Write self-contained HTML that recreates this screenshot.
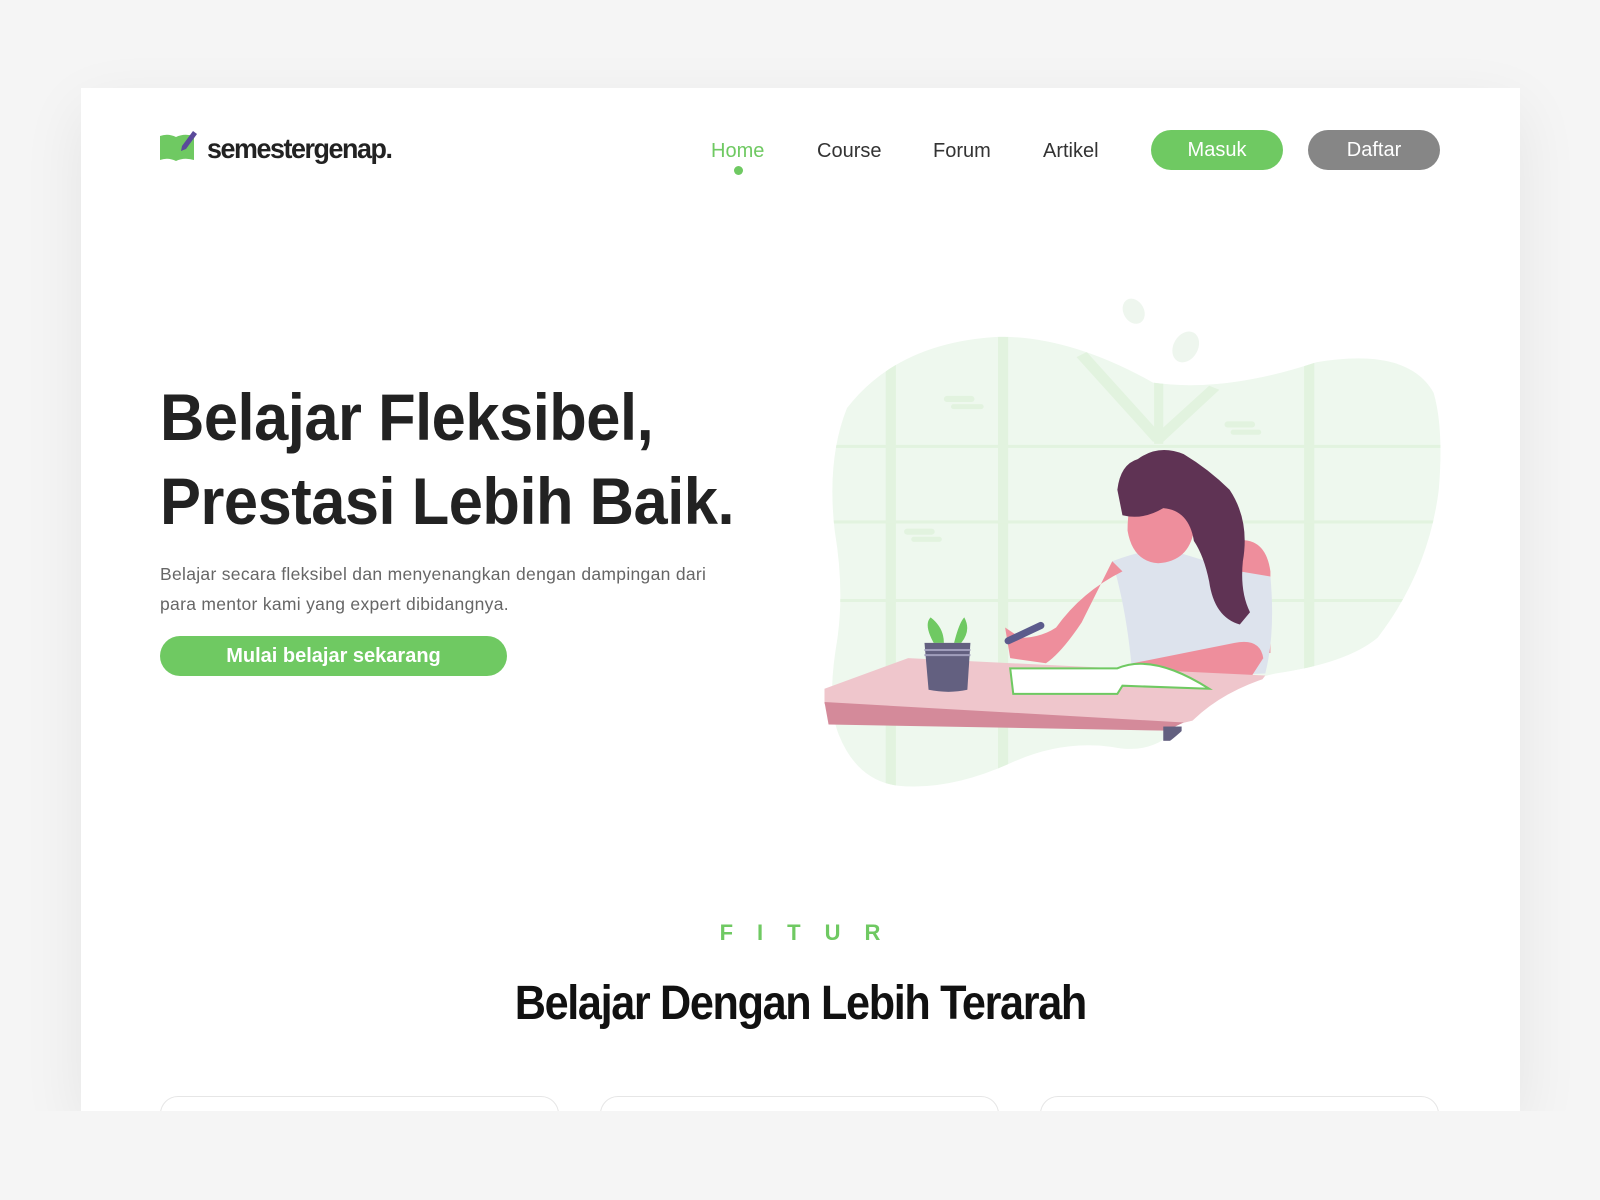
<!DOCTYPE html>
<html><head><meta charset="utf-8"><style>
*{margin:0;padding:0;box-sizing:border-box}
body{width:1600px;height:1200px;background:#f5f5f5;position:relative;overflow:hidden;font-family:"Liberation Sans",sans-serif}
.card{position:absolute;left:81px;top:88px;width:1439px;height:1023px;background:#fff;box-shadow:0 20px 60px rgba(0,0,0,.07);overflow:hidden}
.abs{position:absolute}
.nav{font-size:20px;color:#333;top:140px}
.btn{position:absolute;border-radius:20px;color:#fff;font-size:20px;text-align:center;line-height:40px;height:40px}
h1{position:absolute;left:160px;top:375px;font-size:66px;line-height:84px;color:#222;font-weight:bold;letter-spacing:-0.5px;transform:scaleX(.93);transform-origin:left}
p.d{position:absolute;left:160px;top:559px;font-size:17.5px;line-height:30px;color:#666;width:600px;letter-spacing:0.3px}
.fc{position:absolute;top:1096px;width:399px;height:60px;border:1px solid #e6e6e6;border-radius:18px}
</style></head><body>
<div class="card"></div>
<svg class="abs" style="left:158px;top:126px" width="42" height="38" viewBox="0 0 42 38">
<path d="M2 10 Q10 7 18 11 Q26 7 36 10 L36 34 Q26 31 18 35 Q10 31 2 34 Z" fill="#6fc962"/>
<path d="M24 20 L35 5 L39 8 L28 23 L23 25 Z" fill="#5a4a9a"/>
</svg>
<div class="abs" style="left:207px;top:133px;font-size:28px;font-weight:bold;color:#222;letter-spacing:-1.5px;transform:scaleX(.96);transform-origin:left">semestergenap.</div>
<div class="abs nav" style="left:711px;color:#6fc962">Home</div>
<div class="abs" style="left:734px;top:166px;width:9px;height:9px;border-radius:50%;background:#6fc962"></div>
<div class="abs nav" style="left:817px">Course</div>
<div class="abs nav" style="left:933px">Forum</div>
<div class="abs nav" style="left:1043px">Artikel</div>
<div class="btn" style="left:1151px;top:130px;width:132px;background:#6fc962">Masuk</div>
<div class="btn" style="left:1308px;top:130px;width:132px;background:#868686">Daftar</div>
<h1>Belajar Fleksibel,<br>Prestasi Lebih Baik.</h1>
<p class="d">Belajar secara fleksibel dan menyenangkan dengan dampingan dari<br>para mentor kami yang expert dibidangnya.</p>
<div class="btn" style="left:160px;top:636px;width:347px;background:#6fc962;font-weight:bold;font-size:20px">Mulai belajar sekarang</div>
<div class="abs" style="left:0;width:1600px;top:920px;text-align:center;font-size:22px;font-weight:bold;color:#6fc962;letter-spacing:24px;padding-left:24px">FITUR</div>
<div class="abs" style="left:0;width:1600px;top:976px;text-align:center;font-size:48px;font-weight:bold;color:#111;letter-spacing:-1.5px"><span style="display:inline-block;transform:scaleX(.9)">Belajar Dengan Lebih Terarah</span></div>
<div class="fc" style="left:160px"></div>
<div class="fc" style="left:600px"></div>
<div class="fc" style="left:1040px"></div>
<div class="abs" style="left:0;top:1111px;width:1600px;height:89px;background:#f5f5f5"></div>
<svg class="abs" style="left:0;top:0" width="1600" height="1200" viewBox="0 0 1568 1176">
<defs><clipPath id="b"><path id="bp" d="M830 400 Q880 335 980 330 Q1050 330 1130 375 Q1200 385 1290 355 Q1380 340 1405 385 Q1415 420 1410 480 Q1400 560 1350 625 Q1320 650 1250 660 Q1180 675 1140 725 Q1120 738 1090 732 Q1040 725 990 748 Q930 775 880 770 Q840 765 822 720 Q810 690 820 630 Q828 580 818 520 Q810 450 830 400 Z"/></clipPath></defs>
<use href="#bp" fill="#eef8ee"/>
<g clip-path="url(#b)" fill="#e2f3df">
<rect x="868" y="330" width="10" height="450"/><rect x="978" y="330" width="10" height="450"/><rect x="1278" y="330" width="10" height="450"/>
<rect x="800" y="436" width="640" height="3"/><rect x="800" y="510" width="640" height="3"/><rect x="800" y="587" width="640" height="3"/>
<rect x="1131" y="375" width="9" height="60"/>
<path d="M1055 350 L1065 345 L1140 428 L1130 433 Z M1185 378 L1195 382 L1140 433 L1130 428 Z"/>
<rect x="925" y="388" width="30" height="6" rx="3"/><rect x="932" y="396" width="32" height="5" rx="2.5"/>
<rect x="1200" y="413" width="30" height="6" rx="3"/><rect x="1206" y="421" width="30" height="5" rx="2.5"/>
<rect x="886" y="518" width="30" height="6" rx="3"/><rect x="893" y="526" width="30" height="5" rx="2.5"/>
</g>
<g fill="#eef6ee"><ellipse cx="1111" cy="305" rx="10" ry="13" transform="rotate(-30 1111 305)"/><ellipse cx="1162" cy="340" rx="12" ry="16" transform="rotate(30 1162 340)"/><ellipse cx="1223" cy="721" rx="10" ry="13" transform="rotate(50 1223 721)"/></g>
<path d="M1210 530 Q1240 525 1245 560 L1245 640 L1215 640 Z" fill="#ee8e9c"/>
<path d="M1090 550 Q1130 535 1150 540 L1215 560 L1245 565 Q1250 620 1240 660 L1110 665 Q1105 600 1090 550 Z" fill="#dde3ed"/>
<path d="M1090 550 Q1075 580 1060 610 Q1040 640 1025 650 L990 645 L985 615 L1000 625 Q1020 625 1035 615 Q1060 580 1100 560 Z" fill="#ee8e9c"/>
<path d="M1105 520 Q1105 470 1135 475 Q1170 480 1170 520 Q1165 550 1135 552 Q1110 550 1105 520 Z" fill="#ee8e9c"/>
<path d="M1095 480 Q1098 455 1115 450 Q1135 435 1160 445 Q1185 460 1205 480 Q1225 510 1218 550 Q1215 580 1225 600 L1215 612 Q1190 605 1185 570 Q1180 545 1170 530 Q1165 500 1140 498 Q1120 510 1100 505 Z" fill="#5f3354"/>
<path d="M1110 650 L1210 630 Q1235 625 1238 645 L1225 665 L1120 670 Z" fill="#ee8e9c"/>
<path d="M808 675 L890 645 L1240 662 L1215 695 L1145 712 L808 690 Z" fill="#efc6cc"/>
<path d="M808 688 L1160 708 L1143 716 L812 710 Z" fill="#d48a9a"/>
<rect x="1140" y="712" width="18" height="14" fill="#636080"/>
<path d="M990 655 L1095 655 Q1130 640 1185 675 L1100 672 L1095 680 L993 680 Z" fill="#fff" stroke="#6fc962" stroke-width="2"/>
<path d="M1300 652 Q1215 662 1170 705 Q1150 725 1138 732 L1450 740 L1450 652 Z" fill="#fff"/>
<path d="M988 628 L1020 613" stroke="#5b5b8c" stroke-width="7" stroke-linecap="round"/>
<path d="M915 630 Q905 612 912 605 Q925 615 925 630 Z M935 630 Q940 610 945 605 Q952 618 942 630 Z" fill="#6fc962"/>
<path d="M906 630 L951 630 L948 676 Q930 680 910 676 Z" fill="#636080"/>
<rect x="906" y="636" width="45" height="2" fill="#a09dbb"/><rect x="906" y="641" width="45" height="2" fill="#a09dbb"/>
</svg>
</body></html>
